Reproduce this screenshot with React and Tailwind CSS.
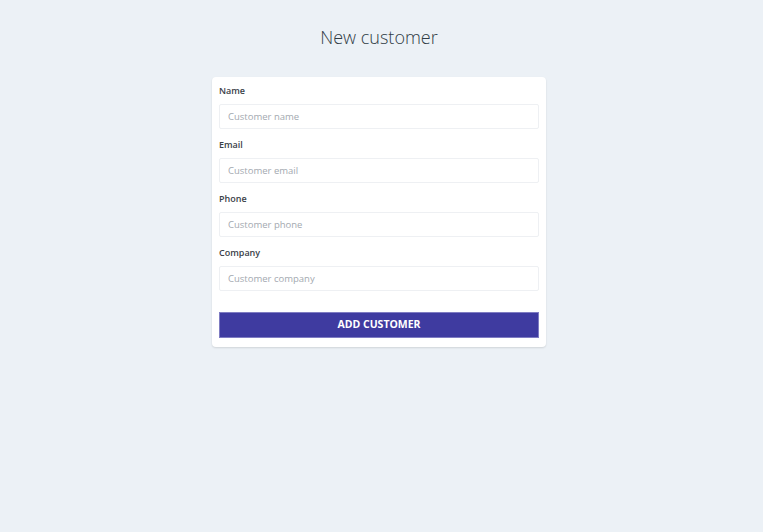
import React from "react";

const fields = [
    { label: "Name", placeholder: "Customer name" },
    { label: "Email", placeholder: "Customer email" },
    { label: "Phone", placeholder: "Customer phone" },
    { label: "Company", placeholder: "Customer company" },
];

const App = () => {
    return (
        <div className="min-h-[532px] w-full bg-[#ecf1f6] font-['Open_Sans',sans-serif] text-[#333]">
            <div className="flex flex-col items-center pt-[24px] pr-[5px]">
                <h1 className="text-[18px] font-light leading-[26px] text-[#2f3b45]">New customer</h1>

                <form
                    className="mt-[27px] w-[334px] rounded-[4px] bg-white px-[7px] pt-[8px] pb-[9px] shadow-[0_1px_2px_rgba(0,0,0,0.12)]"
                    onSubmit={(e) => e.preventDefault()}
                >
                    {fields.map((field) => (
                        <div key={field.label} className="mb-[10px] flex flex-col">
                            <label className="mb-[7px] text-[9px] leading-[12px] font-semibold text-[#3a4148]">
                                {field.label}
                            </label>
                            <input
                                type="text"
                                placeholder={field.placeholder}
                                className="h-[25px] w-full rounded-[2px] border border-[#eef0f3] px-[8px] text-[9.5px] outline-none placeholder:text-[#a3a9b0]"
                            />
                        </div>
                    ))}

                    <button
                        type="submit"
                        className="mt-[11px] h-[26px] w-full border border-[#7f7cc2] bg-[#3f3ba0] text-[10.5px] font-bold text-white"
                    >
                        ADD CUSTOMER
                    </button>
                </form>
            </div>
        </div>
    );
};

export default App;
